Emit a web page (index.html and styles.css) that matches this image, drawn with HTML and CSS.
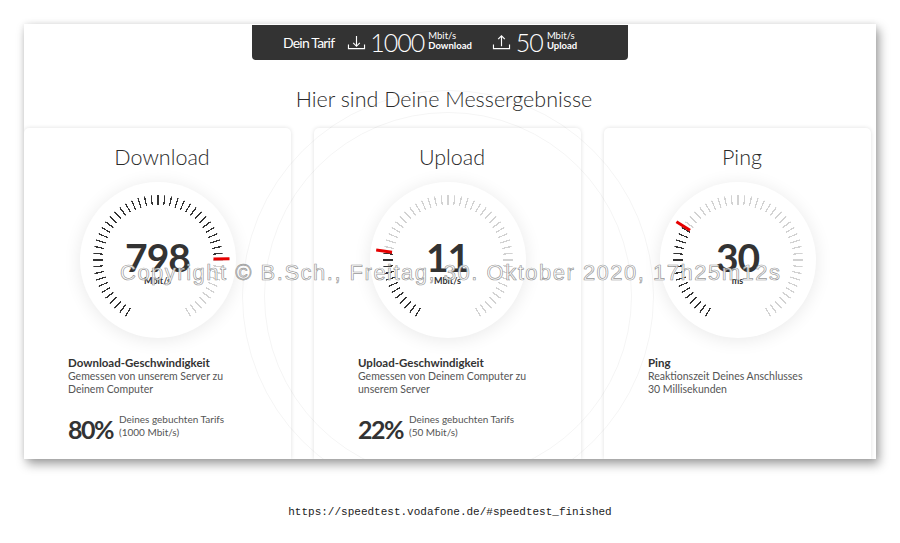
FILE: index.html
```html
<!DOCTYPE html>
<html lang="de">
<head>
<meta charset="utf-8">
<title>Speedtest</title>
<link rel="stylesheet" href="styles.css">
</head>
<body>
<div class="page">
  <div class="panel">
    <div class="tab">
      <span class="tab-label">Dein Tarif</span>
      <svg class="tab-icon" viewBox="0 0 20 18" width="19" height="17"><path d="M1.5 11v4.5h17V11" fill="none" stroke="#fff" stroke-width="1.2"/><path d="M10 2v11M6.5 9.5 10 13l3.5-3.5" fill="none" stroke="#fff" stroke-width="1.2"/></svg>
      <span class="tab-num">1000</span>
      <span class="tab-unit"><span>Mbit/s</span><b>Download</b></span>
      <svg class="tab-icon up" viewBox="0 0 20 18" width="19" height="17"><path d="M1.5 11v4.5h17V11" fill="none" stroke="#fff" stroke-width="1.2"/><path d="M10 13V2M6.5 5.5 10 2l3.5 3.5" fill="none" stroke="#fff" stroke-width="1.2"/></svg>
      <span class="tab-num">50</span>
      <span class="tab-unit"><span>Mbit/s</span><b>Upload</b></span>
    </div>
    <h1 class="title">Hier sind Deine Messergebnisse</h1>
    <div class="cards">
      <div class="card">
        <h2 class="card-title">Download</h2>
        <div class="gauge">
          <div class="ticks" style="--a:89deg">
            <span class="value">798</span>
            <span class="unit">Mbit/s</span>
          </div>
          <span class="needle" style="--a:89deg"></span>
        </div>
        <div class="desc">
          <strong>Download-Geschwindigkeit</strong>
          <p>Gemessen von unserem Server zu<br>Deinem Computer</p>
          <div class="share"><span class="pct">80%</span><span class="share-text">Deines gebuchten Tarifs<br>(1000 Mbit/s)</span></div>
        </div>
      </div>
      <div class="card">
        <h2 class="card-title">Upload</h2>
        <div class="gauge">
          <div class="ticks" style="--a:-82deg">
            <span class="value">11</span>
            <span class="unit">Mbit/s</span>
          </div>
          <span class="needle" style="--a:-82deg"></span>
        </div>
        <div class="desc">
          <strong>Upload-Geschwindigkeit</strong>
          <p>Gemessen von Deinem Computer zu<br>unserem Server</p>
          <div class="share"><span class="pct">22%</span><span class="share-text">Deines gebuchten Tarifs<br>(50 Mbit/s)</span></div>
        </div>
      </div>
      <div class="card">
        <h2 class="card-title">Ping</h2>
        <div class="gauge">
          <div class="ticks" style="--a:-58deg">
            <span class="value">30</span>
            <span class="unit">ms</span>
          </div>
          <span class="needle" style="--a:-58deg"></span>
        </div>
        <div class="desc">
          <strong>Ping</strong>
          <p>Reaktionszeit Deines Anschlusses<br>30 Millisekunden</p>
        </div>
      </div>
    </div>
    <div class="mark-ring outer"></div>
    <div class="mark-ring inner"></div>
    <div class="copyright">Copyright © B.Sch., Freitag, 30. Oktober 2020, 17h25m12s</div>
  </div>
  <div class="url">https://speedtest.vodafone.de/#speedtest_finished</div>
</div>
</body>
</html>
```
FILE: styles.css
```css
html, body {
  margin: 0;
  padding: 0;
  background: #fff;
}

body {
  font-family: Lato, "Open Sans", sans-serif;
  color: #333;
}

.page {
  padding: 24px 24px 0 24px;
}

.panel {
  position: relative;
  width: 852px;
  height: 435px;
  background: #fff;
  box-shadow: 3px 5px 10px rgba(0, 0, 0, 0.38), 0 0 6px rgba(0, 0, 0, 0.08);
  display: flex;
  flex-direction: column;
  overflow: hidden;
}

.tab {
  margin: 1px 0 0 228px;
  width: 376px;
  height: 35px;
  box-sizing: border-box;
  padding-left: 31px;
  background: #333;
  border-radius: 0 0 4px 4px;
  display: flex;
  align-items: center;
  color: #fff;
}

.tab-label {
  font-size: 14px;
  letter-spacing: -0.8px;
  margin-right: 13px;
}

.tab-icon {
  display: block;
  margin-right: 4px;
}

.tab-icon.up {
  margin-left: 20px;
  margin-right: 5px;
}

.tab-num {
  font-size: 25px;
  font-weight: 300;
  letter-spacing: -1px;
  line-height: 1;
  margin-right: 4px;
}

.tab-unit {
  display: flex;
  flex-direction: column;
  font-size: 9.5px;
  line-height: 10px;
  margin-top: -3px;
}

.tab-unit b {
  font-weight: 700;
}

.title {
  margin: 26px 0 0 0;
  text-align: center;
  font-size: 21.5px;
  line-height: 26px;
  font-weight: 300;
  color: #2a2a2a;
  padding-right: 12px;
}

.cards {
  margin-top: 16px;
  display: flex;
  gap: 23px;
  flex: 1;
}

.card {
  width: 267px;
  background: #fff;
  border-radius: 5px 5px 0 0;
  box-shadow: 0 0 4px rgba(0, 0, 0, 0.13);
  display: flex;
  flex-direction: column;
  position: relative;
  z-index: 1;
}

.card-title {
  margin: 16px 0 0 0;
  padding-left: 9px;
  text-align: center;
  font-size: 21.5px;
  line-height: 26px;
  font-weight: 300;
  color: #2a2a2a;
}

.gauge {
  position: relative;
  margin: 12px auto 0 auto;
  width: 156px;
  height: 156px;
  border-radius: 50%;
  background: #fff;
  box-shadow: 0 2px 18px rgba(0, 0, 0, 0.09);
  display: flex;
  align-items: center;
  justify-content: center;
}

.ticks {
  width: 130px;
  height: 130px;
  border-radius: 50%;
  background:
    radial-gradient(circle closest-side, #fff 84.5%, transparent 85%),
    repeating-conic-gradient(from -150.6deg, transparent 0 1.2deg, #fff 1.2deg 6deg),
    conic-gradient(from -150.6deg, #333 0 calc(var(--a) + 150deg), #d2d2d2 0 301.2deg, #fff 0);
  display: flex;
  flex-direction: column;
  align-items: center;
  justify-content: center;
}

.value {
  font-size: 39px;
  font-weight: 700;
  line-height: 38px;
  letter-spacing: -1px;
  color: #333;
  margin-top: 4px;
}

.unit {
  font-size: 9px;
  font-weight: 700;
  line-height: 10px;
  color: #333;
}

.needle {
  position: absolute;
  left: 50%;
  top: 50%;
  width: 3px;
  height: 16px;
  margin-left: -1.5px;
  background: #e60000;
  transform-origin: 50% 0;
  transform: rotate(var(--a)) translateY(-72px);
}

.desc {
  padding: 18px 0 0 44px;
  color: #333;
}

.desc strong {
  display: block;
  font-size: 11.5px;
  line-height: 14px;
  font-weight: 700;
}

.desc p {
  margin: 0;
  font-size: 10.5px;
  line-height: 12.5px;
  color: #555;
}

.share {
  margin-top: 22px;
  display: flex;
  align-items: flex-start;
}

.pct {
  font-size: 25px;
  font-weight: 700;
  line-height: 24px;
  letter-spacing: -1.5px;
  margin-right: 6px;
}

.share-text {
  font-size: 10px;
  line-height: 12.5px;
  color: #555;
  margin-top: -4px;
}

.mark-ring {
  position: absolute;
  border-radius: 50%;
  border: 1px solid rgba(0, 0, 0, 0.045);
  pointer-events: none;
  z-index: 2;
}

.mark-ring.outer {
  left: 218px;
  top: 66px;
  width: 410px;
  height: 410px;
}

.mark-ring.inner {
  left: 240px;
  top: 88px;
  width: 366px;
  height: 366px;
}

.copyright {
  position: absolute;
  left: 96px;
  top: 236px;
  z-index: 3;
  font-family: "Liberation Sans", Arial, sans-serif;
  font-size: 22px;
  letter-spacing: 1.5px;
  color: rgba(255, 255, 255, 0.88);
  -webkit-text-stroke: 0.7px rgba(140, 140, 140, 0.9);
  white-space: nowrap;
}

.url {
  margin-top: 46px;
  text-align: center;
  font-family: "Liberation Mono", "DejaVu Sans Mono", monospace;
  font-size: 11px;
  line-height: 14px;
  color: #222;
}
```
